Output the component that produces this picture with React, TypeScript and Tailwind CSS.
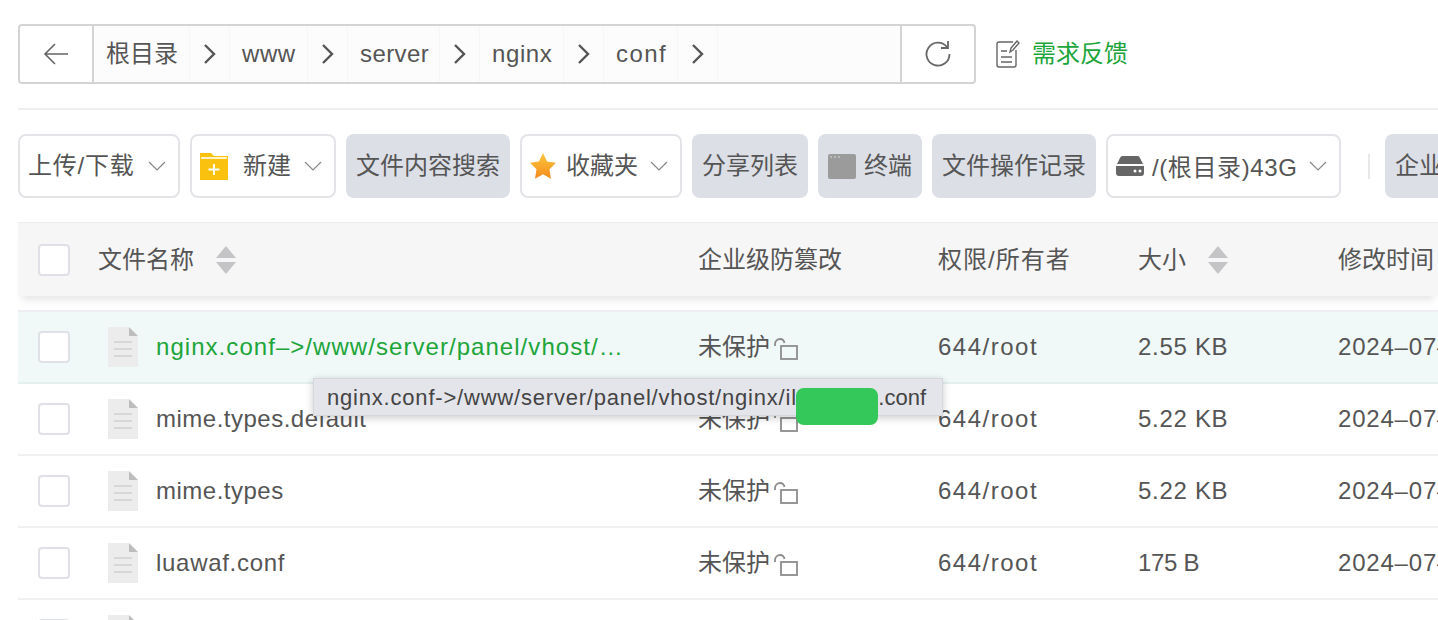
import React from "react";

const files = [
    { name: "nginx.conf–>/www/server/panel/vhost/…", size: "2.55 KB", active: true, nameTrack: "tracking-[1.05px]", sizeTrack: "tracking-[0.7px]" },
    { name: "mime.types.default", size: "5.22 KB", active: false, nameTrack: "tracking-[0.5px]", sizeTrack: "tracking-[0.7px]" },
    { name: "mime.types", size: "5.22 KB", active: false, nameTrack: "tracking-[0.5px]", sizeTrack: "tracking-[0.7px]" },
    { name: "luawaf.conf", size: "175 B", active: false, nameTrack: "tracking-[0.7px]", sizeTrack: "tracking-[-0.3px]" },
    { name: "", size: "", active: false, nameTrack: "", sizeTrack: "" },
];

const crumbs = [
    { label: "根目录", cls: "w-[96px]" },
    { label: "www", cls: "w-[78px] tracking-[0.6px]" },
    { label: "server", cls: "w-[92px] tracking-[0.4px]" },
    { label: "nginx", cls: "w-[84px] tracking-[0.6px]" },
    { label: "conf", cls: "w-[74px] tracking-[1.4px]" },
];

const rowGrid = "grid grid-cols-[80px_600px_240px_200px_200px_1fr] items-center";

function Chevron() {
    return (
        <svg width="14" height="22" viewBox="0 0 14 22" fill="none" stroke="#555" strokeWidth="2.4">
            <path d="M2 2l9 9-9 9" />
        </svg>
    );
}

function Caret() {
    return (
        <svg width="18" height="10" viewBox="0 0 18 10" fill="none" stroke="#888" strokeWidth="1.2">
            <path d="M1 1l8 8 8-8" />
        </svg>
    );
}

function SortArrows() {
    return (
        <svg width="20" height="28" viewBox="0 0 20 28" fill="#c4c4c6">
            <path d="M10 0l10 12H0z" />
            <path d="M0 16h20L10 28z" />
        </svg>
    );
}

function FileIcon() {
    return (
        <svg width="30" height="40" viewBox="0 0 30 40">
            <path d="M0 0h20l10 10v30H0z" fill="#ececec" />
            <path d="M21 0l9 9h-9z" fill="#bdbdbd" />
            <path d="M6 15h18M6 22h18M6 29h18" stroke="#d0d0d0" strokeWidth="1.6" />
        </svg>
    );
}

function UnlockIcon() {
    return (
        <svg width="24" height="24" viewBox="0 0 24 24" fill="none" stroke="#8c8c8c" strokeWidth="1.8" className="ml-[4px] mt-[4px]">
            <path d="M1 9V7.500C1 4 3.500 2 6 2s4 1.500 4.500 4" />
            <rect x="7" y="9" width="16" height="13" />
        </svg>
    );
}

function Checkbox() {
    return <div className="w-8 h-8 rounded-[4px] border-2 border-[#dfe1e6] bg-white ml-5" />;
}

function ToolButton({ children, width, caret = false, gray = false }: { children: React.ReactNode; width: string; caret?: boolean; gray?: boolean }) {
    return (
        <div
            className={`${width} h-16 shrink-0 rounded-[8px] flex items-center justify-between whitespace-nowrap ${
                gray ? "bg-[#dcdfe6] px-[10px]" : "bg-white border-2 border-[#e2e4e8] pl-2 pr-3"
            }`}
        >
            {children}
            {caret && <Caret />}
        </div>
    );
}

export default function App() {
    return (
        <div className="relative w-[1438px] h-[620px] overflow-hidden bg-white pl-[18px] pt-6 text-[24px] text-[#555] font-['Liberation_Sans','Noto_Sans_CJK_SC',sans-serif]">
            {/* path bar */}
            <div className="flex items-center h-[60px]">
                <div className="flex h-[60px] w-[958px] rounded-[4px] border-2 border-[#d4d4d4]">
                    <div className="w-[74px] shrink-0 flex items-center justify-center border-r-2 border-[#d4d4d4]">
                        <svg width="26" height="22" viewBox="0 0 26 22" fill="none" stroke="#666" strokeWidth="1.6">
                            <path d="M25 11H2M12 1L2 11l10 10" />
                        </svg>
                    </div>
                    <div className="flex-1 flex bg-[#fcfcfc]">
                        {crumbs.map((crumb) => (
                            <React.Fragment key={crumb.label}>
                                <div className={`${crumb.cls} pl-3 flex items-center border-r border-[#f6f6f6]`}>{crumb.label}</div>
                                <div className="w-10 flex items-center justify-center border-r border-[#f6f6f6]">
                                    <Chevron />
                                </div>
                            </React.Fragment>
                        ))}
                    </div>
                    <div className="w-[74px] shrink-0 flex items-center justify-center border-l-2 border-[#d4d4d4]">
                        <svg width="26" height="28" viewBox="0 0 26 28" fill="none" stroke="#666" strokeWidth="1.8">
                            <path d="M22 7a11.500 11.500 0 1 0 2.500 7" />
                            <path d="M23 1v7h-7" />
                        </svg>
                    </div>
                </div>
                <svg width="24" height="28" viewBox="0 0 24 28" fill="none" stroke="#666" strokeWidth="1.4" className="ml-5">
                    <path d="M17 2H3a2 2 0 0 0-2 2v21a2 2 0 0 0 2 2h15a2 2 0 0 0 2-2V10" />
                    <path d="M5 11h6M5 17h11M5 22h11" />
                    <path d="M14 12l1-4 6-7 2 2-6 7z" />
                </svg>
                <span className="ml-3 text-[#20a53a]">需求反馈</span>
            </div>

            <div className="h-[2px] bg-[#efefef] mt-6" />

            {/* toolbar */}
            <div className="flex items-center gap-[10px] mt-[24px] h-16">
                <ToolButton width="w-[162px]" caret><span className="tracking-[0.8px]">上传/下载</span></ToolButton>
                <ToolButton width="w-[146px]" caret>
                    <svg width="28" height="32" viewBox="0 0 28 32">
                        <path d="M0 3h11l3 3h14v24H0z" fill="#fbc10f" />
                        <path d="M1 7h26v2H1z" fill="#fff2c4" />
                        <path d="M14 14v11M8.500 19.500h11" stroke="#fff" strokeWidth="1.800" />
                    </svg>
                    <span className="ml-[15px]">新建</span>
                    <span className="flex-1" />
                </ToolButton>
                <ToolButton width="w-[164px]" gray>文件内容搜索</ToolButton>
                <ToolButton width="w-[162px]" caret>
                    <svg width="26" height="26" viewBox="0 0 26 26">
                        <defs>
                            <linearGradient id="star" x1="0" y1="0" x2="0" y2="1">
                                <stop offset="0" stopColor="#fbc83a" />
                                <stop offset="1" stopColor="#f58a1f" />
                            </linearGradient>
                        </defs>
                        <path d="M13 0l4 8.500 9 1.300-6.500 6.500 1.500 9.500-8-4.500-8 4.500 1.500-9.500L0 9.800l9-1.300z" fill="url(#star)" />
                    </svg>
                    <span className="ml-[10px]">收藏夹</span>
                    <span className="flex-1" />
                </ToolButton>
                <ToolButton width="w-[116px]" gray>分享列表</ToolButton>
                <ToolButton width="w-[104px]" gray>
                    <svg width="28" height="32" viewBox="0 0 28 32">
                        <rect width="28" height="25" y="4" rx="2" fill="#9b9b9b" />
                        <path d="M2 7h2M6 7h2M10 7h2" stroke="#d8d8d8" strokeWidth="1.200" />
                    </svg>
                    <span>终端</span>
                </ToolButton>
                <ToolButton width="w-[164px]" gray>文件操作记录</ToolButton>
                <ToolButton width="w-[235px]" caret>
                    <svg width="28" height="20" viewBox="0 0 28 20">
                        <path d="M7 0h14a3 3 0 0 1 3 2l3 6H1l3-6a3 3 0 0 1 3-2z" fill="#666" />
                        <path d="M0 10h28v7a3 3 0 0 1-3 3H3a3 3 0 0 1-3-3z" fill="#666" />
                        <circle cx="19" cy="15" r="1.500" fill="#fff" />
                        <circle cx="24" cy="15" r="1.500" fill="#fff" />
                    </svg>
                    <span className="ml-[8px] mt-[3px] tracking-[0.6px]">/(根目录)43G</span>
                    <span className="flex-1" />
                </ToolButton>
                <div className="w-[2px] h-[25px] bg-[#e8e8e8] ml-[17px] mr-[5px] shrink-0" />
                <ToolButton width="w-[120px]" gray>企业级防篡改</ToolButton>
            </div>

            {/* table */}
            <div className={`${rowGrid} mt-6 h-[74px] bg-[#f6f6f6] border-t border-[#eeeeee] shadow-[0_8px_8px_-4px_rgba(0,0,0,0.1)] relative`}>
                <Checkbox />
                <div className="flex items-center gap-[22px]">
                    文件名称
                    <SortArrows />
                </div>
                <div>企业级防篡改</div>
                <div className="tracking-[1px]">权限/所有者</div>
                <div className="flex items-center gap-[22px]">
                    大小
                    <SortArrows />
                </div>
                <div className="whitespace-nowrap">修改时间</div>
            </div>
            <div className="h-[14px]" />
            {files.map((file, index) => (
                <div
                    key={index}
                    className={`${rowGrid} border-b-2 whitespace-nowrap ${
                        file.active ? "h-[74px] bg-[#f0f8f8] border-b-[#e3f0ee] border-t-2 border-t-[#eeeff2]" : "h-[72px] border-[#f0f0f0]"
                    }`}
                >
                    <Checkbox />
                    <div className="flex items-center pl-[10px]">
                        <FileIcon />
                        <span className={`ml-[18px] ${file.nameTrack} ${file.active ? "text-[#20a53a]" : ""}`}>{file.name}</span>
                    </div>
                    <div className="flex items-center">
                        未保护
                        <UnlockIcon />
                    </div>
                    <div className="tracking-[1.500px]">644/root</div>
                    <div className={file.sizeTrack}>{file.size}</div>
                    <div className="tracking-[0.8px]">2024–07–</div>
                </div>
            ))}

            {/* tooltip */}
            <div className="absolute left-[313px] top-[378px] w-[630px] h-[38px] flex items-center pl-[13px] bg-[#e4e5ea] border border-[#d6d7dc] shadow-[0_2px_8px_rgba(0,0,0,0.2)] text-[22px] text-[#444] whitespace-nowrap">
                <span className="tracking-[0.8px]">nginx.conf-&gt;/www/server/panel/vhost/nginx/il</span>
                <span className="ml-auto mr-[16px]">.conf</span>
            </div>
            <div className="absolute left-[796px] top-[388px] w-[82px] h-[37px] rounded-[8px] bg-[#34c759]" />
        </div>
    );
}
